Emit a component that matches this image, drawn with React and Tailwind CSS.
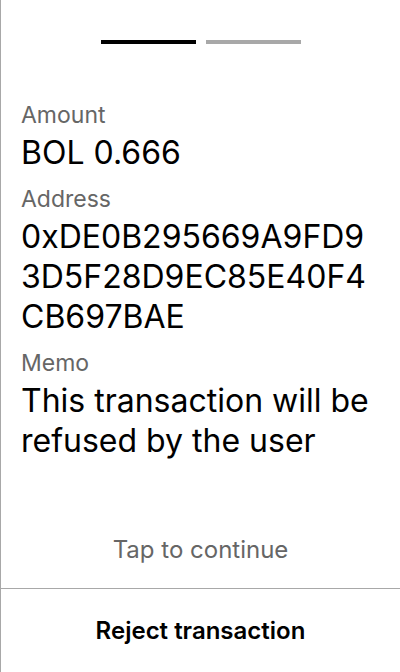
export default function App() {
  const fields = [
    { label: 'Amount', value: 'BOL 0.666', breakAll: false },
    { label: 'Address', value: '0xDE0B295669A9FD93D5F28D9EC85E40F4CB697BAE', breakAll: true },
    { label: 'Memo', value: 'This transaction will be refused by the user', breakAll: false },
  ];

  return (
    <div
      className="flex h-[672px] w-[400px] flex-col border-l border-[#a8a8a8] bg-white text-black"
      style={{ fontFamily: 'Inter, "Noto Sans", sans-serif' }}
    >
      <div className="flex justify-center gap-[10px] pt-10">
        <div className="h-1 w-[95px] bg-black" />
        <div className="h-1 w-[95px] bg-[#a8a8a8]" />
      </div>

      <div className="flex flex-1 flex-col px-5 pt-[57px]">
        {fields.map((f) => (
          <div key={f.label} className="mb-3 flex flex-col gap-1">
            <span className="text-[23px] leading-[28px] text-[#666]">{f.label}</span>
            <span
              className={
                f.breakAll
                  ? 'break-all text-[32px] leading-[40px]'
                  : 'text-[32px] leading-[40px]'
              }
            >
              {f.value}
            </span>
          </div>
        ))}
        <div className="mt-auto pb-[22px] text-center text-[24px] leading-[32px] text-[#666]">
          Tap to continue
        </div>
      </div>

      <div className="flex h-[84px] items-center justify-center border-t border-[#a8a8a8]">
        <span className="text-[24px] font-semibold leading-[32px]">Reject transaction</span>
      </div>
    </div>
  );
}
